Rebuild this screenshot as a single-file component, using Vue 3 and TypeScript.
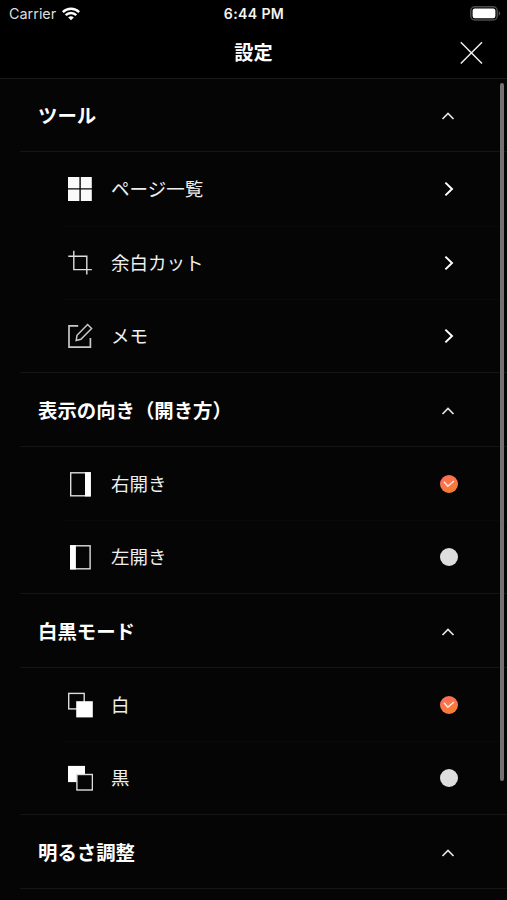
<script setup lang="ts">
type IconName = 'grid' | 'crop' | 'memo' | 'right' | 'left' | 'white' | 'black'

interface Item {
  label: string
  icon: IconName
  selected?: boolean
}

interface Section {
  title: string
  kind: 'link' | 'radio'
  items: Item[]
}

const sections: Section[] = [
  {
    title: 'ツール',
    kind: 'link',
    items: [
      { label: 'ページ一覧', icon: 'grid' },
      { label: '余白カット', icon: 'crop' },
      { label: 'メモ', icon: 'memo' },
    ],
  },
  {
    title: '表示の向き（開き方）',
    kind: 'radio',
    items: [
      { label: '右開き', icon: 'right', selected: true },
      { label: '左開き', icon: 'left', selected: false },
    ],
  },
  {
    title: '白黒モード',
    kind: 'radio',
    items: [
      { label: '白', icon: 'white', selected: true },
      { label: '黒', icon: 'black', selected: false },
    ],
  },
  { title: '明るさ調整', kind: 'link', items: [] },
]
</script>

<template>
  <div class="screen">
    <header>
      <div class="status">
        <div class="carrier">
          <span>Carrier</span>
          <svg width="18" height="14" viewBox="0 0 18 14" fill="none" stroke="#fff" stroke-width="2.5">
            <path d="M.8 5.1a11.7 11.7 0 0 1 16.4 0M3.7 8.2a7.6 7.6 0 0 1 10.6 0" />
            <path d="M9 13.3 6.2 10.5a4 4 0 0 1 5.6 0Z" fill="#fff" stroke="none" />
          </svg>
        </div>
        <span class="time">6:44 PM</span>
        <svg class="battery" width="31" height="15" viewBox="0 0 31 15">
          <rect x=".8" y=".8" width="26.4" height="13.2" rx="4" fill="none" stroke="#4c4c4c" stroke-width="1.5" />
          <rect x="2.6" y="2.6" width="22.8" height="9.6" rx="2.2" fill="#fff" />
          <path d="M28.7 5.1q3 2.3 0 4.6Z" fill="#555" />
        </svg>
      </div>
      <div class="titlebar">
        <h1>設定</h1>
        <button class="close" aria-label="閉じる">
          <svg width="24" height="24" viewBox="0 0 24 24" fill="none" stroke="#eee" stroke-width="1.5">
            <path d="M1.8 1.3 23 22.5M23 1.3 1.8 22.5" />
          </svg>
        </button>
      </div>
    </header>

    <main>
      <section v-for="section in sections" :key="section.title" :class="section.kind">
        <div class="row heading">
          <h2>{{ section.title }}</h2>
          <svg class="caret" width="14" height="10" viewBox="0 0 14 10" fill="none" stroke="#e4e4e4" stroke-width="1.7">
            <path d="M1.5 8 7 2.4 12.5 8" />
          </svg>
        </div>
        <div v-for="item in section.items" :key="item.label" class="row item">
          <svg class="icon" width="26" height="26" viewBox="0 0 26 26" fill="none" stroke="#ddd" stroke-width="1.4">
            <path v-if="item.icon === 'grid'" fill="#fafafa" stroke="none" d="M1 1h11.4v11.2H1ZM13.8 1h11v11.2h-11ZM1 13.6h11.4V25H1ZM13.8 13.6h11V25h-11Z" />
            <path v-else-if="item.icon === 'crop'" d="M6.8.7v18.9h18M1.3 6.2h18.5v18.4" />
            <g v-else-if="item.icon === 'memo'" stroke="#c8c8c8" stroke-width="1.7">
              <path d="M11.2 2.8H2v21.4h21.4V15" />
              <path d="m9.2 17.4.8-5.1L20.6 1.5l4 4L13.9 16.3Z" stroke-width="1.5" />
            </g>
            <g v-else-if="item.icon === 'right'">
              <rect x="3.7" y="1.8" width="19.4" height="23" />
              <path d="M18 1.2h5.8v24.2H18Z" fill="#fff" stroke="none" />
            </g>
            <g v-else-if="item.icon === 'left'">
              <rect x="3.7" y="1.8" width="19.4" height="23" />
              <path d="M3 1.2h5.9v24.2H3Z" fill="#fff" stroke="none" />
            </g>
            <g v-else-if="item.icon === 'white'">
              <rect x="1.7" y="1.4" width="15.5" height="15.5" />
              <path d="M9.2 9.2h16.6v16.2H9.2Z" fill="#fff" stroke="none" />
            </g>
            <g v-else>
              <path d="M1 .9h17v16.2H1Z" fill="#fff" stroke="none" />
              <rect x="9.9" y="9.5" width="15.5" height="15.5" fill="#050505" />
            </g>
          </svg>
          <span class="label">{{ item.label }}</span>
          <svg v-if="section.kind === 'link'" class="chevron" width="10" height="16" viewBox="0 0 10 16" fill="none" stroke="#fff" stroke-width="2">
            <path d="M1.4 1.6 8 8 1.4 14.4" />
          </svg>
          <span v-else class="radio-dot" :class="{ on: item.selected }">
            <svg v-if="item.selected" width="12" height="8" viewBox="0 0 12 8" fill="none" stroke="#ffe9dc" stroke-width="1.5">
              <path d="M1 1.7 4.8 6.2 11 1" />
            </svg>
          </span>
        </div>
      </section>
      <div class="scrollbar"></div>
    </main>
  </div>
</template>

<style>
body {
  margin: 0;
  background: #000;
}
</style>

<style scoped>
.screen {
  height: 900px;
  overflow: hidden;
  display: flex;
  flex-direction: column;
  background: #000;
  color: #fff;
  font-family: Inter, 'Noto Sans CJK JP', sans-serif;
}
header {
  height: 78px;
  flex: none;
  box-sizing: border-box;
}
.status {
  height: 27px;
  display: grid;
  grid-template-columns: 1fr auto 1fr;
  align-items: center;
  padding: 0 6px 0 9px;
}
.carrier {
  display: flex;
  align-items: center;
  gap: 6px;
  font-size: 14.4px;
  color: #ddd;
}
.time {
  font-size: 14.1px;
  font-weight: 600;
  letter-spacing: 0.35px;
  margin-right: 2px;
  color: #f4f4f4;
}
.battery {
  justify-self: end;
}
.titlebar {
  height: 51px;
  display: grid;
  grid-template-columns: 1fr auto 1fr;
  align-items: center;
  padding-right: 24px;
  padding-left: 24px;
}
h1 {
  grid-column: 2;
  margin: 0;
  font-size: 19.2px;
  line-height: 28px;
  font-weight: 700;
}
.close {
  justify-self: end;
  display: flex;
  padding: 0;
  border: 0;
  background: none;
}
main {
  position: relative;
  flex: 1;
  overflow: hidden;
  background: #050505;
  border-top: 1px solid #171717;
}
.row {
  height: 73.67px;
  box-sizing: border-box;
  display: flex;
  align-items: center;
  padding-right: 48px;
}
.heading {
  height: 73px;
  margin-left: 20px;
  padding-top: 2px;
  padding-left: 18px;
  border-bottom: 1px solid #151515;
  justify-content: space-between;
}
section + section .heading {
  height: 74.7px;
  margin-top: -1px;
  padding-top: 3px;
  border-top: 1px solid #151515;
}
h2 {
  margin: 0;
  font-size: 19.4px;
  line-height: 28px;
  font-weight: 700;
}
.caret {
  margin-right: 4px;
}
.item {
  margin-left: 63px;
  padding-left: 4px;
}
.item + .item {
  border-top: 1px solid #090909;
}
.radio .heading + .item {
  padding-top: 1px;
}
.item:last-child {
  padding-bottom: 2px;
}
.icon {
  flex: none;
  margin-right: 18px;
}
.label {
  flex: 1;
  color: #eee;
  font-size: 18.5px;
  line-height: 28px;
}
.chevron {
  margin-right: 5px;
}
.radio-dot {
  width: 18px;
  height: 18px;
  margin-right: 1px;
  border-radius: 50%;
  background: #dedede;
  display: flex;
  align-items: center;
  justify-content: center;
}
.radio-dot.on {
  background: linear-gradient(150deg, #ff6a62, #f5802b);
}
.scrollbar {
  position: absolute;
  top: 4px;
  right: 3px;
  width: 4px;
  height: 698px;
  border-radius: 2px;
  background: #727272;
}
</style>
